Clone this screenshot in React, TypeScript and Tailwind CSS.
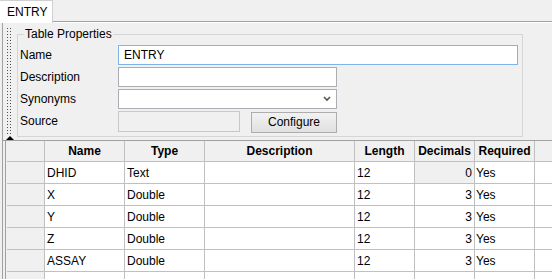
import React from 'react';

type Row = { name: string; type: string; desc: string; length: string; decimals: string; required: string };

const rows: Row[] = [
  { name: 'DHID', type: 'Text', desc: '', length: '12', decimals: '0', required: 'Yes' },
  { name: 'X', type: 'Double', desc: '', length: '12', decimals: '3', required: 'Yes' },
  { name: 'Y', type: 'Double', desc: '', length: '12', decimals: '3', required: 'Yes' },
  { name: 'Z', type: 'Double', desc: '', length: '12', decimals: '3', required: 'Yes' },
  { name: 'ASSAY', type: 'Double', desc: '', length: '12', decimals: '3', required: 'Yes' },
  { name: '', type: '', desc: '', length: '', decimals: '', required: '' },
];

const cols = 'grid grid-cols-[38px_80px_80px_150px_60px_60px_60px_1fr]';

function Field({ label, children }: { label: string; children: React.ReactNode }) {
  return (
    <div className="flex items-center h-[22px]">
      <span className="w-[99px] pl-[1px]">{label}</span>
      {children}
    </div>
  );
}

export default function App() {
  return (
    <div className="w-[552px] h-[279px] bg-[#f0f0f0] overflow-hidden text-[12px] text-black font-['Liberation_Sans',Arial,sans-serif] leading-none">
      {/* tab strip */}
      <div className="flex h-[23px]">
        <div className="w-[53px] h-[23px] bg-white border-r border-t border-[#d0d0d0] flex items-center pl-[7px]">ENTRY</div>
        <div className="flex-1 flex flex-col justify-end">
          <div className="h-[1px] bg-[#a0a0a0]" />
          <div className="h-[1px] bg-white" />
        </div>
      </div>

      {/* properties panel */}
      <div className="flex h-[117px]">
        <div className="w-[3px] border-r border-[#a0a0a0] h-full" />
        <div className="relative w-[14px] h-full">
          <div className="absolute left-[3px] top-[4px] bottom-[6px] w-[5px] bg-[radial-gradient(#505050_0.6px,transparent_0.8px)] bg-[length:3px_3px]" />
          <div className="absolute left-[3px] bottom-[0px] w-0 h-0 border-l-[4px] border-r-[4px] border-b-[4px] border-l-transparent border-r-transparent border-b-black" />
        </div>
        <fieldset className="w-[506px] h-[109px] mt-[5px] border border-[#d5d5d5] px-[1px] pt-[1px]">
          <legend className="ml-[5px] px-[1px] text-[12px]">Table Properties</legend>
          <div className="flex flex-col pt-[3px]">
            <Field label="Name">
              <div className="w-[400px] h-[20px] bg-white border border-[#7eb4ea] flex items-center pl-[5px]">ENTRY</div>
            </Field>
            <Field label="Description">
              <div className="w-[219px] h-[20px] bg-white border border-[#abadb3]" />
            </Field>
            <Field label="Synonyms">
              <div className="w-[219px] h-[20px] bg-white border border-[#abadb3] flex items-center justify-end pr-[5px]">
                <svg width="8" height="6" viewBox="0 0 8 6">
                  <path d="M1 1 L4 4 L7 1" stroke="#555" strokeWidth="1.6" fill="none" />
                </svg>
              </div>
            </Field>
            <Field label="Source">
              <div className="w-[122px] h-[21px] bg-[#f0f0f0] border border-[#c8c8c8] mt-[1px]" />
              <button className="ml-[11px] w-[86px] h-[21px] mt-[2px] bg-[linear-gradient(#f2f2f2,#e0e0e0)] border border-[#adadad] text-[12px]">Configure</button>
            </Field>
          </div>
        </fieldset>
      </div>

      {/* grid */}
      <div className="h-[139px] pl-[2px]">
        <div className="h-full border-l border-t border-[#a0a0a0] pl-[2px]">
          <div className="h-full border-l border-[#a0a0a0] pl-[1px]">
            <div className={`${cols} h-[21px] border-b border-[#c0c0c0] font-bold`}>
              <div className="border-r border-[#c0c0c0]" />
              <div className="border-r border-[#c0c0c0] flex items-center justify-center">Name</div>
              <div className="border-r border-[#c0c0c0] flex items-center justify-center">Type</div>
              <div className="border-r border-[#c0c0c0] flex items-center justify-center">Description</div>
              <div className="border-r border-[#c0c0c0] flex items-center justify-center">Length</div>
              <div className="border-r border-[#c0c0c0] flex items-center justify-center">Decimals</div>
              <div className="border-r border-[#c0c0c0] flex items-center justify-center">Required</div>
              <div />
            </div>
            {rows.map((r, i) => (
              <div key={i} className={`${cols} h-[22px] border-b border-[#c0c0c0]`}>
                <div className="border-r border-[#c0c0c0]" />
                <div className="bg-white border-r border-[#c0c0c0] flex items-center pl-[2px]">{r.name}</div>
                <div className="bg-white border-r border-[#c0c0c0] flex items-center pl-[2px]">{r.type}</div>
                <div className="bg-white border-r border-[#c0c0c0]" />
                <div className="bg-white border-r border-[#c0c0c0] flex items-center pl-[2px]">{r.length}</div>
                <div className={`${i === 0 ? 'bg-[#f0f0f0]' : 'bg-white'} border-r border-[#c0c0c0] flex items-center justify-end pr-[2px]`}>{r.decimals}</div>
                <div className="bg-white border-r border-[#c0c0c0] flex items-center pl-[1px]">{r.required}</div>
                <div className="bg-white" />
              </div>
            ))}
          </div>
        </div>
      </div>
    </div>
  );
}
